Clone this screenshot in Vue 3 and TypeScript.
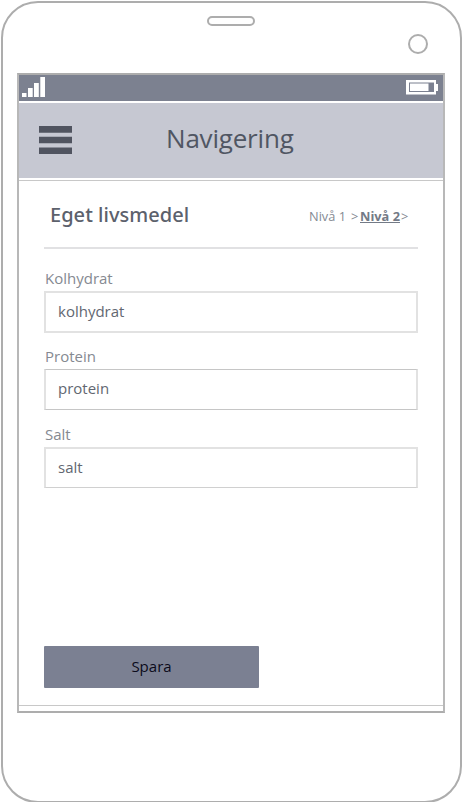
<script setup lang="ts">
import { ref } from 'vue'

interface Field {
  id: string
  label: string
  value: string
}

const fields = ref<Field[]>([
  { id: 'carb', label: 'Kolhydrat', value: 'kolhydrat' },
  { id: 'protein', label: 'Protein', value: 'protein' },
  { id: 'salt', label: 'Salt', value: 'salt' },
])
</script>

<template>
  <div class="phone">
    <div class="bezel">
      <div class="speaker"></div>
      <div class="camera"></div>
    </div>
    <div class="screen">
      <div class="status">
        <svg class="signal" width="24" height="21" viewBox="0 0 24 21">
          <path fill="#fff" d="M0 17h4.500v4H0zM6 12h4.700v9H6zM12 7h4.800v14H12zM18.300 1h4.700v20h-4.700z" />
        </svg>
        <svg class="battery" width="32" height="15" viewBox="0 0 32 15">
          <path fill="#fff" d="M0 0h30v4h2v7h-2v3.500H0z" />
          <path fill="#7b8090" d="M3 2.500h25v9.500H3z" />
          <path fill="#fff" d="M4 3.500h18.500v7.500H4z" />
        </svg>
      </div>
      <header class="header">
        <svg class="menu" width="33" height="28" viewBox="0 0 33 28">
          <path fill="#505460" d="M0 0h33v6.700H0zM0 10.800h33v6.400H0zM0 21.500h33V28H0z" />
        </svg>
        <h1>Navigering</h1>
      </header>
      <main class="panel">
        <div class="heading">
          <h2>Eget livsmedel</h2>
          <nav class="crumbs"><span class="one">Nivå 1</span><span class="gt">&gt;</span><a>Nivå 2</a><span class="gt last">&gt;</span></nav>
        </div>
        <div v-for="f in fields" :key="f.id" class="field" :class="f.id">
          <label :for="f.id">{{ f.label }}</label>
          <div :id="f.id" class="input">{{ f.value }}</div>
        </div>
        <button class="save">Spara</button>
      </main>
    </div>
  </div>
</template>

<style>
body {
  background: #fff;
}
</style>

<style scoped>
* {
  box-sizing: border-box;
}
.phone {
  width: 461px;
  height: 802px;
  margin-left: 1px;
  padding: 0 15px;
  border: 2px solid #adadad;
  border-radius: 37px;
  transform: translateY(1px);
  background: #fff;
  font-family: "Open Sans", "Noto Sans", sans-serif;
}
.bezel {
  display: flex;
  justify-content: flex-end;
  height: 70px;
}
.speaker {
  width: 48px;
  height: 10px;
  margin: 13px 153px 0 0;
  border: 2px solid #adadad;
  border-radius: 5px;
}
.camera {
  width: 20px;
  height: 20px;
  margin: 31px 17px 0 0;
  border: 2px solid #adadad;
  border-radius: 50%;
}
.screen {
  width: 428px;
  height: 640px;
  margin-left: -1px;
  border: 2px solid #adadad;
  border-left-color: #b8b8b8;
  border-right-color: #b8b8b8;
}
.status {
  display: flex;
  justify-content: space-between;
  height: 26px;
  padding: 1px 5px 0 3px;
  background: #7c8190;
}
.battery {
  margin-top: 4px;
}
.header {
  display: flex;
  align-items: flex-start;
  height: 75px;
  margin-top: 2px;
  padding-left: 20px;
  background: #c6c8d2;
}
.menu {
  margin-top: 23px;
}
h1 {
  margin: 17px 0 0 94px;
  color: #505663;
  font-size: 26px;
  font-weight: 400;
  line-height: 36px;
  letter-spacing: -0.2px;
}
.panel {
  height: 526px;
  margin-top: 2px;
  padding: 0 25px;
  border-top: 1px solid #c8c8c8;
  border-bottom: 1px solid #c8c8c8;
}
.heading {
  display: flex;
  justify-content: space-between;
  height: 68px;
  border-bottom: 2px solid #e1e1e3;
}
h2 {
  margin: 18px 0 0 6px;
  color: #5c616c;
  font-family: "Noto Sans", "Open Sans", sans-serif;
  font-size: 20px;
  font-weight: 500;
  line-height: 32px;
  letter-spacing: 0.04px;
}
.crumbs {
  display: flex;
  margin: 26px 8px 0 0;
  color: #858a93;
  font-size: 12.800px;
  line-height: 18px;
}
.one {
  width: 42px;
}
.gt {
  width: 9px;
}
.crumbs a {
  width: 41px;
  color: #737a86;
  font-weight: 700;
  text-decoration: underline;
}
.field {
  height: 78px;
  padding-top: 18px;
}
.field + .save {
  margin-top: 163px;
}
label {
  display: block;
  height: 24px;
  padding-left: 1px;
  color: #858991;
  font-size: 15px;
  line-height: 22px;
}
.input {
  width: 374px;
  height: 41px;
  padding-left: 12px;
  border: 2px solid #e2e2e2;
  color: #626771;
  font-size: 15px;
  line-height: 37px;
}
.carb .input {
  height: 42px;
  line-height: 36px;
}
.protein .input {
  border-top: 1px solid #c6c6c6;
  border-bottom: 1px solid #c6c6c6;
}
.salt .input {
  border-bottom: 1px solid #d0d0d0;
}
.save {
  display: block;
  width: 215px;
  height: 42px;
  padding: 0 0 2px;
  border: 0;
  border-radius: 1px;
  background: #7b8092;
  color: #0b0b1b;
  font: 400 15px/40px "Open Sans", "Noto Sans", sans-serif;
}
</style>
